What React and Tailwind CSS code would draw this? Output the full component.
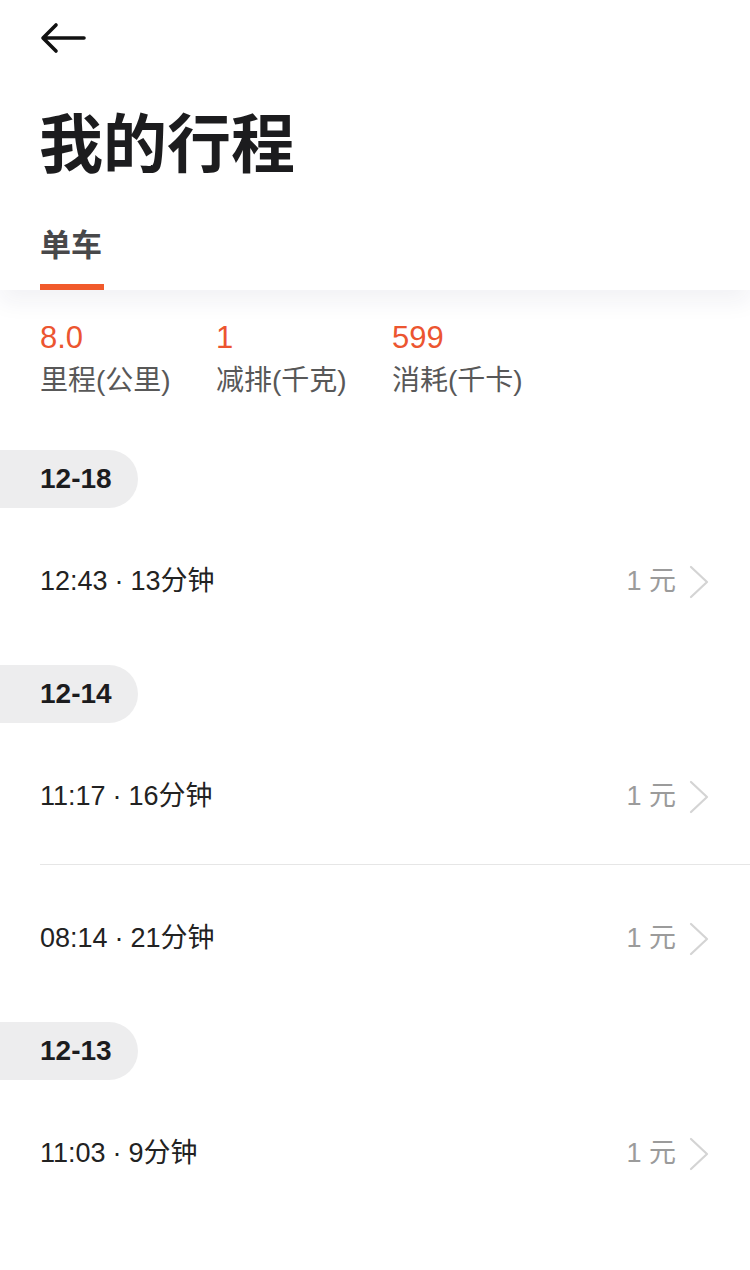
import React from "react";

const groups = [
  { date: "12-18", trips: [{ time: "12:43", mins: "13分钟", price: "1 元" }] },
  {
    date: "12-14",
    trips: [
      { time: "11:17", mins: "16分钟", price: "1 元" },
      { time: "08:14", mins: "21分钟", price: "1 元" },
    ],
  },
  { date: "12-13", trips: [{ time: "11:03", mins: "9分钟", price: "1 元" }] },
];

const stats = [
  { value: "8.0", label: "里程(公里)" },
  { value: "1", label: "减排(千克)" },
  { value: "599", label: "消耗(千卡)" },
];

const font = { fontFamily: '"Liberation Sans", "Noto Sans CJK SC", sans-serif' };

const Chevron = () => (
  <svg width="22" height="34" viewBox="0 0 22 34" fill="none">
    <path d="M3 2 L19 17 L3 32" stroke="#d4d4d4" strokeWidth="2.2" strokeLinecap="round" strokeLinejoin="round" />
  </svg>
);

const TripRow = ({ trip }) => (
  <div className="flex items-center justify-between h-[141px] pt-[6px] pl-[40px] pr-[40px]">
    <span className="text-[27px] text-[#222222]">
      {trip.time}
      <span className="mx-[7px]">·</span>
      {trip.mins}
    </span>
    <div className="flex items-center gap-[12px]">
      <span className="text-[27px] text-[#9b9b9b]">{trip.price}</span>
      <Chevron />
    </div>
  </div>
);

const App = () => {
  return (
    <div className="min-h-[1270px] w-[750px] bg-white" style={font}>
      <div className="relative z-10 bg-white shadow-[0_12px_22px_rgba(30,40,80,0.06)]">
        <div className="h-[76px] flex items-center pl-[40px]">
          <svg width="46" height="32" viewBox="0 0 46 32" fill="none">
            <path d="M44 16 H4 M16 3 L3 16 L16 29" stroke="#111111" strokeWidth="3.6" strokeLinecap="round" strokeLinejoin="round" />
          </svg>
        </div>
        <h1 className="mt-[32px] pl-[39px] text-[64px] leading-[74px] font-bold text-[#1c1c1e]">我的行程</h1>
        <div className="mt-[44px] pl-[40px]">
          <div className="inline-flex flex-col">
            <span className="text-[31px] leading-[40px] font-bold text-[#48484a]">单车</span>
            <div className="mt-[18px] h-[6px] w-[64px] bg-[#f15a2b]" />
          </div>
        </div>
      </div>

      <div className="flex pl-[40px] pt-[30px] pb-[52px]">
        {stats.map((s) => (
          <div key={s.label} className="w-[176px] flex flex-col">
            <span className="text-[31px] leading-[36px] text-[#ec5530]">{s.value}</span>
            <span className="mt-[8px] text-[28px] leading-[34px] text-[#585858]">{s.label}</span>
          </div>
        ))}
      </div>

      {groups.map((g, gi) => (
        <div key={g.date} className={gi === 0 ? "" : "mt-[16px]"}>
          <div className="w-[138px] h-[58px] rounded-r-full bg-[#ededee] flex items-center pl-[40px]">
            <span className="text-[28px] font-bold text-[#1c1c1e]">{g.date}</span>
          </div>
          {g.trips.map((t, ti) => (
            <div key={t.time}>
              {ti > 0 && <div className="ml-[40px] h-px bg-[#e6e6e6]" />}
              <TripRow trip={t} />
            </div>
          ))}
        </div>
      ))}
    </div>
  );
};

export default App;
